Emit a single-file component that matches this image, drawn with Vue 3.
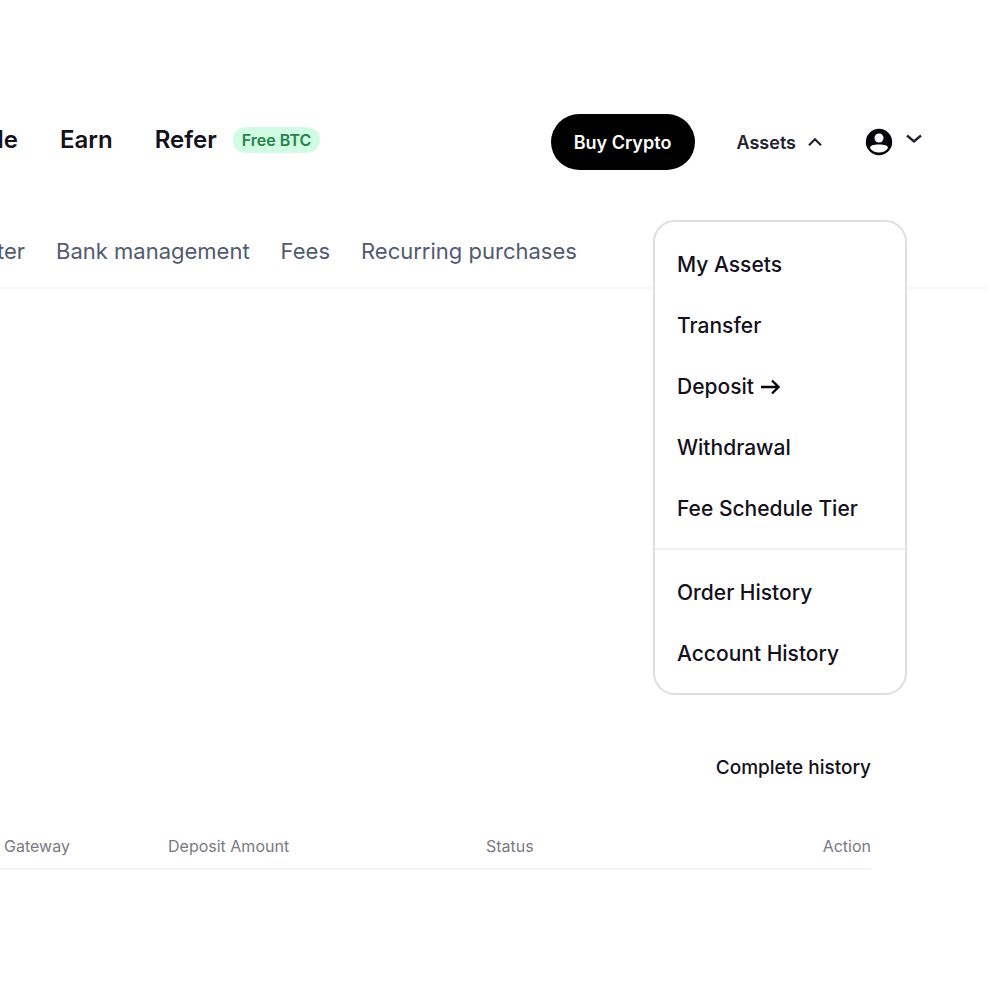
<script setup>
import { ref } from 'vue'

const assetsOpen = ref(true)

const mainLinks = ['Earn', 'Refer']
const subLinks = ['Bank management', 'Fees', 'Recurring purchases']
const assetLinks = ['My Assets', 'Transfer', 'Deposit', 'Withdrawal', 'Fee Schedule Tier']
const historyLinks = ['Order History', 'Account History']
</script>

<template>
  <div class="page">
    <header class="header">
      <nav class="main-nav" aria-label="Main">
        <a href="#" class="cut-link">de</a>
        <a v-for="link in mainLinks" :key="link" href="#" class="main-link">{{ link }}</a>
        <span class="badge">Free BTC</span>
      </nav>

      <div class="actions">
        <button type="button" class="buy">Buy Crypto</button>
        <button
          type="button"
          class="assets-toggle"
          :aria-expanded="assetsOpen"
          @click="assetsOpen = !assetsOpen"
        >
          Assets
          <svg width="14" height="10" viewBox="0 0 14 10" fill="none" aria-hidden="true">
            <path d="M1 8.2 L7 2.2 L13 8.2" stroke="#25222f" stroke-width="2.2" />
          </svg>
        </button>
        <button type="button" class="account" aria-label="Account">
          <svg width="28" height="28" viewBox="0 0 28 28" aria-hidden="true">
            <circle cx="14" cy="14" r="13.2" fill="#08060d" />
            <circle cx="14" cy="10" r="4.5" fill="#fff" />
            <path d="M5 20 C5.4 17.4 8 16.5 14 16.5 C20 16.5 22.6 17.4 23 20 C21 23 17.8 24.6 14 24.6 C10.2 24.6 7 23 5 20 Z" fill="#fff" />
          </svg>
          <svg class="down" width="16" height="10" viewBox="0 0 16 10" fill="none" aria-hidden="true">
            <path d="M1 1.5 L8 7.5 L15 1.5" stroke="#25222f" stroke-width="2.4" />
          </svg>
        </button>
      </div>

      <div v-if="assetsOpen" class="menu">
        <ul>
          <li v-for="link in assetLinks" :key="link">
            <a href="#">
              {{ link }}
              <svg v-if="link === 'Deposit'" width="19" height="16" viewBox="0 0 19 16" fill="none" aria-hidden="true">
                <path d="M0 8 H17 M11 1.5 L17.5 8 L11 14.5" stroke="#08060d" stroke-width="2.4" />
              </svg>
            </a>
          </li>
        </ul>
        <ul>
          <li v-for="link in historyLinks" :key="link"><a href="#">{{ link }}</a></li>
        </ul>
      </div>
    </header>

    <nav class="sub-nav" aria-label="Account sections">
      <a href="#" class="cut-link wide">ter</a>
      <a v-for="link in subLinks" :key="link" href="#">{{ link }}</a>
    </nav>

    <main class="content">
      <a href="#" class="complete">Complete history</a>
      <table>
        <colgroup>
          <col class="col-gateway" />
          <col class="col-amount" />
          <col />
          <col />
        </colgroup>
        <thead>
          <tr>
            <th scope="col">Gateway</th>
            <th scope="col">Deposit Amount</th>
            <th scope="col">Status</th>
            <th scope="col" class="action">Action</th>
          </tr>
        </thead>
      </table>
    </main>
  </div>
</template>

<style>
body {
  margin: 0;
  background: #fff;
}
</style>

<style scoped>
.page {
  min-height: 100vh;
  overflow: hidden;
  box-sizing: border-box;
  padding-top: 114px;
  font-family: Inter, "Liberation Sans", sans-serif;
  color: #14101c;
}

a {
  color: inherit;
  text-decoration: none;
  white-space: nowrap;
}

button {
  border: 0;
  padding: 0;
  background: none;
  font: inherit;
  color: inherit;
  cursor: pointer;
}

svg {
  display: block;
  flex: none;
}

.header {
  position: relative;
  display: flex;
  justify-content: space-between;
  align-items: center;
  padding-right: 78px;
}

.main-nav {
  display: flex;
  align-items: center;
  padding-bottom: 4px;
  font-size: 24px;
  line-height: 28px;
  font-weight: 600;
}

.cut-link {
  display: flex;
  justify-content: flex-end;
  width: 18px;
  overflow: hidden;
}

.cut-link.wide {
  width: 25px;
}

.main-link {
  margin-left: 42px;
}

.badge {
  margin-left: 16px;
  padding: 0 9px;
  border-radius: 13px;
  background: #d2fbe3;
  color: #23834a;
  font-size: 16px;
  line-height: 26px;
}

.actions {
  display: flex;
  align-items: center;
}

.buy {
  width: 144px;
  height: 56px;
  border-radius: 28px;
  background: #000;
  color: #fff;
  font-size: 18px;
  font-weight: 600;
}

.assets-toggle {
  display: flex;
  align-items: center;
  gap: 12px;
  margin-left: 42px;
  font-size: 18px;
  font-weight: 600;
  color: #25222f;
}

.account {
  display: flex;
  align-items: center;
  gap: 13px;
  margin-left: 43px;
}

.down {
  margin-bottom: 6px;
}

.menu {
  position: absolute;
  z-index: 1;
  top: 106px;
  right: 93px;
  width: 250px;
  border: 2px solid #dedee2;
  border-radius: 22px;
  background: #fff;
}

.menu ul {
  margin: 0;
  padding: 12px 0 9px;
  list-style: none;
}

.menu ul + ul {
  border-top: 2px solid #f0f0f1;
}

.menu a {
  display: flex;
  align-items: center;
  gap: 7px;
  padding-left: 22px;
  font-size: 21px;
  line-height: 61px;
  font-weight: 500;
}

.sub-nav {
  display: flex;
  gap: 31px;
  margin-right: 14px;
  padding: 67px 0 22px;
  border-bottom: 2px solid #f5f5f6;
  color: #525a70;
  font-size: 22px;
  line-height: 28px;
}

.content {
  display: flex;
  flex-direction: column;
  align-items: flex-end;
  padding: 467px 129px 0 0;
}

.complete {
  font-size: 19px;
  line-height: 24px;
  font-weight: 500;
}

table {
  width: 100%;
  margin-top: 54px;
  table-layout: fixed;
  border-collapse: collapse;
  border-bottom: 2px solid #f3f3f4;
}

.col-gateway {
  width: 164px;
}

.col-amount {
  width: 318px;
}

th {
  padding: 0 0 10px 4px;
  color: #7b7982;
  font-size: 16px;
  line-height: 24px;
  font-weight: 400;
  text-align: left;
}

.action {
  text-align: right;
}
</style>
